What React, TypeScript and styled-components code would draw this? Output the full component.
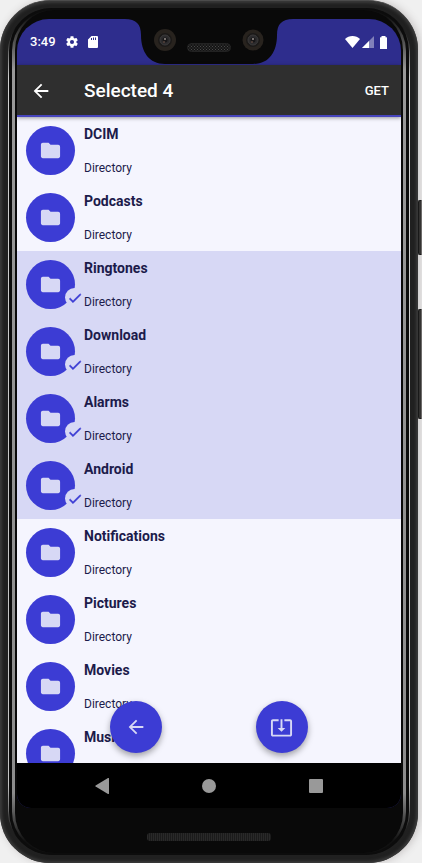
import React, { useState } from "react";
import styled, { createGlobalStyle, css } from "styled-components";

const color = {
  primary: "#3c3cd4",
  statusBar: "#2e2d8d",
  toolbar: "#2f2f2f",
  surface: "#f5f5fe",
  tint: "#d7d8f5",
  ink: "#1c1b4b",
  face: "#090909",
  soft: "#999999",
};

const GlobalStyle = createGlobalStyle`
  *, *::before, *::after { box-sizing: border-box; }
  html, body { margin: 0; }
  body {
    background: #f0f0f0;
    font-family: Roboto, "Noto Sans", sans-serif;
    overflow: hidden;
  }
`;

const resetButton = css`
  appearance: none;
  border: 0;
  padding: 0;
  margin: 0;
  background: none;
  color: inherit;
  font: inherit;
  cursor: pointer;
`;

const fill = css`
  display: flex;
  flex-direction: column;
  flex: 1;
  min-height: 0;
`;

const Device = styled.div`
  position: relative;
  display: flex;
  flex-direction: column;
  height: 100vh;
  padding-right: 4px;
`;

const Shell = styled.div`
  ${fill}
  padding: 7px 8px 8px;
  border-radius: 50px;
  border-top: 1px solid #4c4c4c;
  background: #202020;
  box-shadow: inset 0 0 3px 2px #3b3b3b, 2px 0 8px #c4c0c0;
`;

const Rim = styled.div`
  ${fill}
  padding: 0 1px;
  border-radius: 44px;
  background: linear-gradient(#111 20px, #d0d0d0 70px, #c4c4c4 calc(100% - 70px), #111 calc(100% - 20px));
`;

const Groove = styled.div`
  ${fill}
  padding: 2px 3px;
  border-radius: 43px;
  background: #0c0c0c;
`;

const Rail = styled.div`
  ${fill}
  padding: 0 3px;
  border-radius: 41px;
  background: linear-gradient(#111 6px, #999 60px, #8c8c8c calc(100% - 60px), #111 calc(100% - 12px));
`;

const Face = styled.div`
  ${fill}
  padding: 9px 2px 0;
  border-radius: 40px;
  background: ${color.face};
`;

const Screen = styled.main`
  ${fill}
  overflow: hidden;
  border-radius: 32px 32px 14px 14px;
  background: ${color.statusBar};
`;

const SideKey = styled.span<{ $top: number; $length: number }>`
  position: absolute;
  right: 0;
  top: ${(p) => p.$top}px;
  width: 4px;
  height: ${(p) => p.$length}px;
  border-radius: 2px 0 0 2px;
  background: #343332;
  border: 1px solid #191919;
  border-right-color: #6d6b6a;
`;

const StatusBar = styled.header`
  display: grid;
  grid-template-columns: 1fr 168px 1fr;
  height: 46px;
  flex: none;
  color: #fff;
`;

const StatusGroup = styled.div<{ $end?: boolean }>`
  display: flex;
  align-items: center;
  justify-content: ${(p) => (p.$end ? "flex-end" : "flex-start")};
  gap: ${(p) => (p.$end ? 2 : 9)}px;
  padding: 0 13px;
  white-space: nowrap;

  svg { flex: none; }
`;

const Clock = styled.time`
  font-size: 13px;
  font-weight: 500;
  line-height: 16px;
`;

const Toolbar = styled.div`
  position: relative;
  z-index: 1;
  display: flex;
  align-items: center;
  flex: none;
  height: 52px;
  padding: 2px 12px 0;
  background: ${color.toolbar};
  border-bottom: 2px solid #4745bd;
  box-shadow: 0 1px 4px rgba(0, 0, 0, 0.4);
  color: #fff;
`;

const BackButton = styled.button`
  ${resetButton}
  display: flex;
  width: 24px;
  height: 24px;
  align-items: center;
  justify-content: center;
`;

const Title = styled.h1`
  flex: 1;
  margin: 0 0 0 31px;
  font-size: 19px;
  font-weight: 500;
  line-height: 24px;
`;

const GetButton = styled.button`
  ${resetButton}
  font-size: 13px;
  font-weight: 500;
  line-height: 24px;
`;

const Content = styled.div`
  ${fill}
  position: relative;
  background: ${color.surface};
`;

const List = styled.ul`
  flex: 1;
  min-height: 0;
  margin: 0;
  padding: 0;
  list-style: none;
  overflow-y: auto;
  scrollbar-width: none;
`;

const Row = styled.button<{ $selected: boolean }>`
  ${resetButton}
  display: flex;
  width: 100%;
  height: 67px;
  padding: 9px;
  gap: 9px;
  text-align: left;
  color: ${color.ink};
  background: ${(p) => (p.$selected ? color.tint : "transparent")};
`;

const Avatar = styled.span`
  position: relative;
  display: flex;
  flex: none;
  align-items: center;
  justify-content: center;
  width: 49px;
  height: 49px;
  border-radius: 50%;
  background: ${color.primary};
`;

const Badge = styled.span`
  position: absolute;
  right: -9px;
  bottom: 2px;
  display: flex;
  align-items: center;
  justify-content: center;
  width: 19px;
  height: 19px;
  border-radius: 50%;
  background: ${color.tint};
`;

const Labels = styled.span`
  display: flex;
  flex-direction: column;
  justify-content: space-between;
  height: 50px;
`;

const Name = styled.span`
  font-size: 14px;
  font-weight: 700;
  line-height: 16px;
`;

const Kind = styled.span`
  font-size: 12px;
  line-height: 16px;
`;

const Actions = styled.div`
  position: absolute;
  left: 0;
  right: 0;
  bottom: 10px;
  display: flex;
  justify-content: space-evenly;
  pointer-events: none;
`;

const ActionButton = styled.button`
  ${resetButton}
  display: flex;
  align-items: center;
  justify-content: center;
  width: 52px;
  height: 52px;
  border-radius: 50%;
  background: ${color.primary};
  box-shadow: 0 3px 6px rgba(0, 0, 0, 0.35);
  pointer-events: auto;
`;

const NavBar = styled.nav`
  display: flex;
  align-items: center;
  justify-content: space-evenly;
  flex: none;
  height: 45px;
  background: #000;
`;

const NavButton = styled.button`
  ${resetButton}
  display: flex;
  align-items: center;
  justify-content: center;
  width: 44px;
  height: 44px;
`;

const Chin = styled.div`
  display: flex;
  justify-content: center;
  align-items: center;
  flex: none;
  height: 45px;
  padding-top: 12px;
`;

const Speaker = styled.div`
  width: 124px;
  height: 8px;
  border-radius: 3px;
  background: repeating-linear-gradient(90deg, #292929 0 1px, #1b1b1b 1px 2px);
`;

const ArrowIcon = ({ size, tone }: { size: number; tone: string }) => (
  <svg width={size} height={size} viewBox="0 0 24 24" fill={tone} aria-hidden="true">
    <path d="M20 11H7.830l5.590-5.590L12 4l-8 8 8 8 1.410-1.410L7.830 13H20z" />
  </svg>
);

const FolderIcon = () => (
  <svg width="23" height="23" viewBox="0 0 24 24" fill={color.tint} aria-hidden="true">
    <path d="M10 4H4c-1.100 0-2 .9-2 2v12c0 1.100.9 2 2 2h16c1.100 0 2-.9 2-2V8c0-1.100-.9-2-2-2h-8z" />
  </svg>
);

const CheckIcon = () => (
  <svg
    width="16"
    height="16"
    viewBox="0 0 24 24"
    fill={color.primary}
    stroke={color.primary}
    strokeWidth="0.8"
    aria-hidden="true"
  >
    <path d="M9 16.170 4.830 12l-1.420 1.410L9 19 21 7l-1.410-1.410z" />
  </svg>
);

const DownloadIcon = () => (
  <svg width="23" height="23" viewBox="0 0 24 24" fill={color.tint} aria-hidden="true">
    <path d="m12 16.500 4-4h-3v-9h-2v9H8zM21 3.500h-6v1.990h6v14.030H3V5.490h6V3.500H3c-1.100 0-2 .9-2 2v14c0 1.100.9 2 2 2h18c1.100 0 2-.9 2-2v-14c0-1.100-.9-2-2-2z" />
  </svg>
);

const GearIcon = () => (
  <svg width="14" height="14" viewBox="0 0 24 24" fill="#fff" aria-hidden="true">
    <path d="M19.430 12.980c.04-.32.07-.64.07-.98s-.03-.66-.07-.98l2.110-1.650c.19-.15.24-.42.12-.64l-2-3.460c-.12-.22-.39-.3-.61-.22l-2.490 1c-.52-.4-1.080-.73-1.690-.98l-.38-2.650C14.460 2.180 14.250 2 14 2h-4c-.25 0-.46.18-.49.42l-.38 2.650c-.61.25-1.170.59-1.690.98l-2.490-1c-.23-.09-.49 0-.61.22l-2 3.460c-.13.22-.07.49.12.64l2.110 1.650c-.04.32-.07.65-.07.98s.03.66.07.98l-2.110 1.650c-.19.15-.24.42-.12.64l2 3.460c.12.22.39.3.61.22l2.490-1c.52.4 1.080.73 1.690.98l.38 2.650c.03.24.24.42.49.42h4c.25 0 .46-.18.49-.42l.38-2.650c.61-.25 1.170-.59 1.690-.98l2.490 1c.23.09.49 0 .61-.22l2-3.460c.12-.22.07-.49-.12-.64zM12 15.500a3.500 3.500 0 1 1 0-7 3.500 3.500 0 0 1 0 7z" />
  </svg>
);

const CardIcon = () => (
  <svg width="10" height="12" viewBox="0 0 10 12" fill="#fff" aria-hidden="true">
    <path
      fillRule="evenodd"
      d="M3.500 0H9a1 1 0 0 1 1 1v10a1 1 0 0 1-1 1H1a1 1 0 0 1-1-1V3.500zM3 2v2h1v-2zM5 1.500v2.500h1V1.500zM7 1.500v2.500h1V1.500z"
    />
  </svg>
);

const WifiIcon = () => (
  <svg width="15" height="12" viewBox="0 0 15 12" fill="#fff" aria-hidden="true">
    <path d="M7.500 12 0 3C2 1.200 4.600 0 7.500 0S13 1.200 15 3z" />
  </svg>
);

const SignalIcon = () => (
  <svg width="12" height="12" viewBox="0 0 12 12" fill="#fff" aria-hidden="true">
    <path d="M0 12 12 0v12z" opacity=".4" />
    <path d="M0 12 7 5v7z" />
  </svg>
);

const BatteryIcon = () => (
  <svg width="12" height="13" viewBox="0 0 12 13" fill="#fff" aria-hidden="true">
    <path d="M5.500 1.200V0h4v1.200h1q.5 0 .5.5V12.500q0 .5-.5.5h-6q-.5 0-.5-.5V1.700q0-.5.5-.5z" />
  </svg>
);

const Lens = ({ cx, cy, r }: { cx: number; cy: number; r: number }) => (
  <g>
    <circle cx={cx} cy={cy} r={r} fill="#28231e" />
    <circle cx={cx} cy={cy} r={7} fill="#1b1918" />
    <circle cx={cx} cy={cy} r={5} fill="#2c2b2d" stroke="#3c3b3b" />
    <circle cx={cx} cy={cy} r={2.500} fill="#171617" />
    <path d={`M${cx - 1} ${cy - 2}h2v2h-2z`} fill="#77716f" />
    <circle cx={cx - 1} cy={cy + 2} r={1} fill="#57443c" />
  </g>
);

const Notch = () => (
  <svg width="168" height="46" viewBox="0 0 168 46" aria-hidden="true">
    <defs>
      <pattern id="mesh" width="3" height="3" patternUnits="userSpaceOnUse">
        <rect width="3" height="3" fill="#151515" />
        <path d="M0 0h1v1H0zM1.500 1.500h1v1h-1z" fill="#484848" />
      </pattern>
    </defs>
    <path
      d="M0 0C11 0 16 5 16 16C16 33 24 45 40 45H128C144 45 152 33 152 16C152 5 157 0 168 0z"
      fill={color.face}
    />
    <Lens cx={40} cy={21} r={11} />
    <rect x="62.500" y="24.500" width="43" height="8" rx="4" fill="url(#mesh)" stroke="#222" />
    <Lens cx={128} cy={21} r={10.500} />
  </svg>
);

const folders = [
  "DCIM",
  "Podcasts",
  "Ringtones",
  "Download",
  "Alarms",
  "Android",
  "Notifications",
  "Pictures",
  "Movies",
  "Music",
];

export default function App() {
  const [selected, setSelected] = useState<string[]>(["Ringtones", "Download", "Alarms", "Android"]);

  const toggle = (name: string) =>
    setSelected((now) => (now.includes(name) ? now.filter((n) => n !== name) : [...now, name]));

  return (
    <Device>
      <GlobalStyle />
      <SideKey $top={200} $length={55} />
      <SideKey $top={309} $length={110} />
      <Shell>
        <Rim>
          <Groove>
            <Rail>
              <Face>
                <Screen>
                  <StatusBar>
                    <StatusGroup>
                      <Clock>3:49</Clock>
                      <GearIcon />
                      <CardIcon />
                    </StatusGroup>
                    <Notch />
                    <StatusGroup $end>
                      <WifiIcon />
                      <SignalIcon />
                      <BatteryIcon />
                    </StatusGroup>
                  </StatusBar>
                  <Toolbar>
                    <BackButton aria-label="Back">
                      <ArrowIcon size={22} tone="#fff" />
                    </BackButton>
                    <Title>Selected {selected.length}</Title>
                    <GetButton>GET</GetButton>
                  </Toolbar>
                  <Content>
                    <List>
                      {folders.map((name) => {
                        const on = selected.includes(name);
                        return (
                          <li key={name}>
                            <Row $selected={on} aria-pressed={on} onClick={() => toggle(name)}>
                              <Avatar>
                                <FolderIcon />
                                {on && (
                                  <Badge>
                                    <CheckIcon />
                                  </Badge>
                                )}
                              </Avatar>
                              <Labels>
                                <Name>{name}</Name>
                                <Kind>Directory</Kind>
                              </Labels>
                            </Row>
                          </li>
                        );
                      })}
                    </List>
                    <Actions>
                      <ActionButton aria-label="Previous folder">
                        <ArrowIcon size={22} tone={color.tint} />
                      </ActionButton>
                      <ActionButton aria-label="Download">
                        <DownloadIcon />
                      </ActionButton>
                    </Actions>
                  </Content>
                  <NavBar>
                    <NavButton aria-label="System back">
                      <svg width="14" height="16" viewBox="0 0 14 16" fill={color.soft} aria-hidden="true">
                        <path d="M13 0q1-.4 1 1v14q0 1.400-1 1L.6 8.600Q0 8 .6 7.400z" />
                      </svg>
                    </NavButton>
                    <NavButton aria-label="Home">
                      <svg width="14" height="14" viewBox="0 0 14 14" fill={color.soft} aria-hidden="true">
                        <circle cx="7" cy="7" r="7" />
                      </svg>
                    </NavButton>
                    <NavButton aria-label="Recent apps">
                      <svg width="14" height="14" viewBox="0 0 14 14" fill={color.soft} aria-hidden="true">
                        <rect width="14" height="14" rx="1" />
                      </svg>
                    </NavButton>
                  </NavBar>
                </Screen>
                <Chin>
                  <Speaker />
                </Chin>
              </Face>
            </Rail>
          </Groove>
        </Rim>
      </Shell>
    </Device>
  );
}
